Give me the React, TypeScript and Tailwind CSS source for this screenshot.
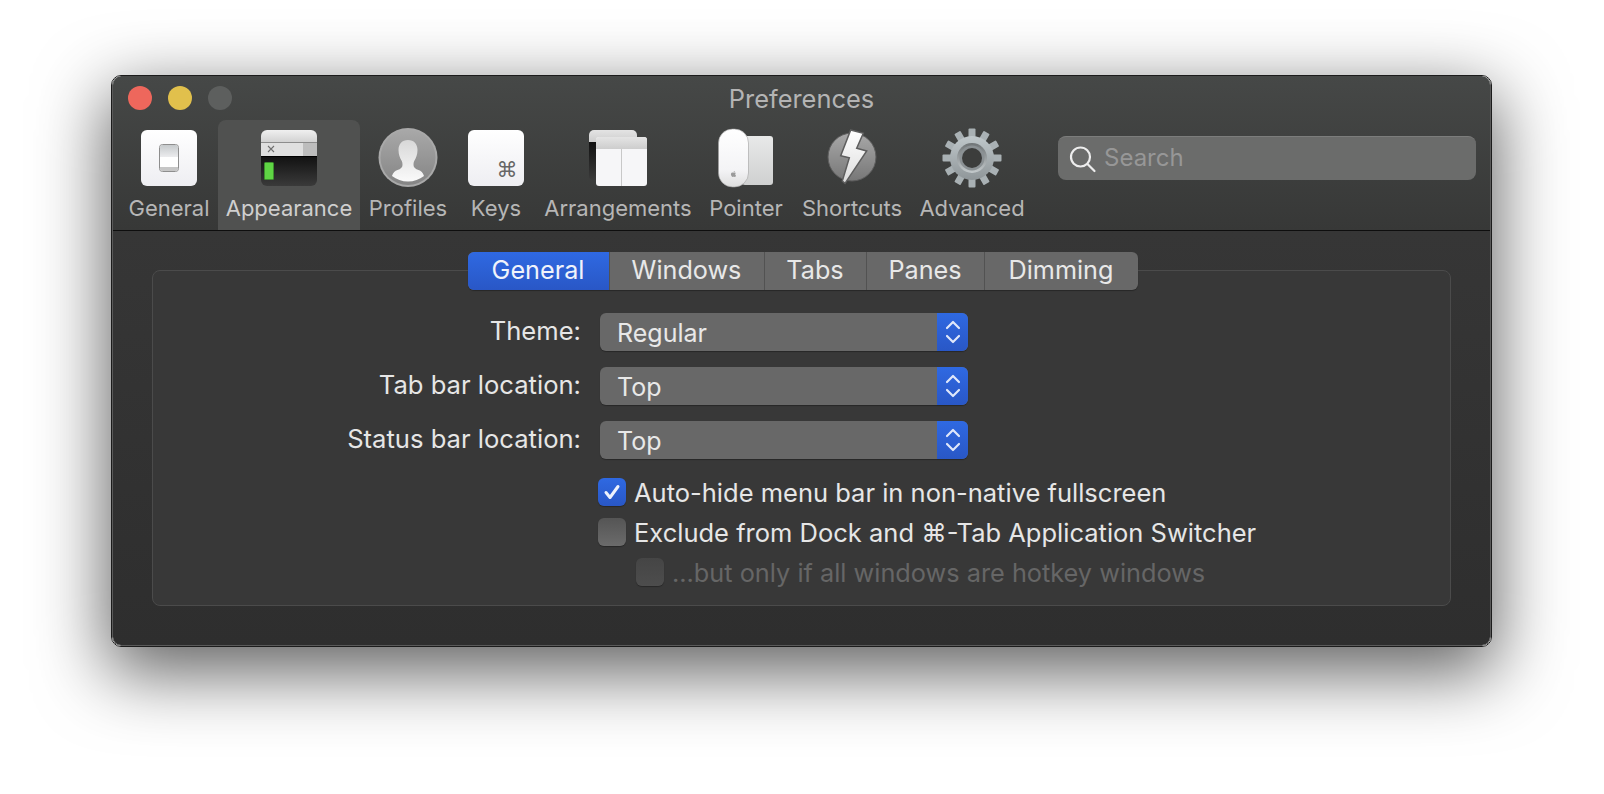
import { FaApple } from "react-icons/fa";

const font = { fontFamily: "Inter, 'DejaVu Sans', sans-serif" };

function GeneralIcon() {
   return (
      <svg width="60" height="60" viewBox="0 0 60 60">
         <defs>
            <linearGradient id="keyBg" x1="0" y1="0" x2="0" y2="1">
               <stop offset="0" stopColor="#ffffff" />
               <stop offset="1" stopColor="#eeeef2" />
            </linearGradient>
            <linearGradient id="swTop" x1="0" y1="0" x2="0" y2="1">
               <stop offset="0" stopColor="#c6cacc" />
               <stop offset="1" stopColor="#ececee" />
            </linearGradient>
         </defs>
         <rect x="2" y="2" width="56" height="56" rx="6" fill="url(#keyBg)" />
         <rect x="20.500" y="16.500" width="19" height="27" rx="3" fill="#fff" stroke="#8e8e8e" />
         <path d="M21 19.500a2.500 2.500 0 0 1 2.500-2.500h13a2.500 2.500 0 0 1 2.500 2.500V29H21z" fill="url(#swTop)" />
         <path d="M21 39h18v1.500a2.500 2.500 0 0 1-2.500 2.500h-13a2.500 2.500 0 0 1-2.500-2.500z" fill="#c6c6c6" />
      </svg>
   );
}

function AppearanceIcon() {
   return (
      <svg width="60" height="60" viewBox="0 0 60 60">
         <defs>
            <linearGradient id="termTop" x1="0" y1="0" x2="0" y2="1">
               <stop offset="0" stopColor="#f0f0f0" />
               <stop offset="1" stopColor="#d2d2d2" />
            </linearGradient>
            <linearGradient id="termBody" x1="0" y1="0" x2="0" y2="1">
               <stop offset="0" stopColor="#111111" />
               <stop offset="1" stopColor="#3a3a3a" />
            </linearGradient>
         </defs>
         <path d="M2 8a6 6 0 0 1 6-6h44a6 6 0 0 1 6 6v6H2z" fill="url(#termTop)" />
         <rect x="2" y="14" width="56" height="1" fill="#8c8c8c" />
         <rect x="2" y="15" width="42" height="13" fill="#dfdfdf" />
         <rect x="44" y="15" width="14" height="13" fill="#bdbdbd" />
         <path d="M9 18l6 6M15 18l-6 6" stroke="#6f6f6f" strokeWidth="1.100" />
         <path d="M2 28h56v24a6 6 0 0 1-6 6H8a6 6 0 0 1-6-6z" fill="url(#termBody)" />
         <rect x="2" y="28" width="56" height="1" fill="#000" />
         <rect x="5" y="34" width="10" height="18" rx="1.500" fill="#3e8f2e" />
         <rect x="6" y="35" width="8" height="16" fill="#5fd544" />
      </svg>
   );
}

function ProfilesIcon() {
   return (
      <svg width="60" height="60" viewBox="0 0 60 60">
         <defs>
            <linearGradient id="profBg" x1="0" y1="0" x2="0" y2="1">
               <stop offset="0" stopColor="#a8a8a8" />
               <stop offset="1" stopColor="#858585" />
            </linearGradient>
            <linearGradient id="profFg" x1="0" y1="0" x2="0" y2="1">
               <stop offset="0" stopColor="#d8d8d8" />
               <stop offset="1" stopColor="#fafafa" />
            </linearGradient>
         </defs>
         <circle cx="30" cy="29.500" r="29.500" fill="#a9a9a9" />
         <circle cx="30" cy="29.500" r="27.500" fill="url(#profBg)" />
         <path
            d="M30 12c-6 0-9.500 4-9.500 10 0 4.500 1.500 8 3 10.500 .8 1.300 1 2.500 1 4.500 0 2.500-2 4-5 5-2.500 .9-4.500 2.500-5.500 6 4.500 3.500 10 5.500 16 5.500s11.500-2 16-5.500c-1-3.500-3-5.100-5.500-6-3-1-5-2.500-5-5 0-2 .2-3.200 1-4.500 1.500-2.500 3-6 3-10.500 0-6-3.500-10-9.500-10z"
            fill="url(#profFg)"
         />
      </svg>
   );
}

function KeysIcon() {
   return (
      <svg width="60" height="60" viewBox="0 0 60 60">
         <defs>
            <linearGradient id="keyBg2" x1="0" y1="0" x2="0" y2="1">
               <stop offset="0" stopColor="#ffffff" />
               <stop offset="1" stopColor="#eeeef2" />
            </linearGradient>
         </defs>
         <rect x="2" y="2" width="56" height="56" rx="6" fill="url(#keyBg2)" />
         <text x="41" y="49" textAnchor="middle" fontSize="21" fill="#666666" fontFamily="'DejaVu Sans', sans-serif">⌘</text>
      </svg>
   );
}

function ArrangementsIcon() {
   return (
      <svg width="60" height="60" viewBox="0 0 60 60">
         <defs>
            <linearGradient id="arrHead" x1="0" y1="0" x2="0" y2="1">
               <stop offset="0" stopColor="#e4e4e4" />
               <stop offset="1" stopColor="#cdcdcd" />
            </linearGradient>
            <linearGradient id="arrDark" x1="0" y1="0" x2="0" y2="1">
               <stop offset="0" stopColor="#111111" />
               <stop offset="1" stopColor="#3a3a3a" />
            </linearGradient>
         </defs>
         <path d="M1 7a5 5 0 0 1 5-5h38a5 5 0 0 1 5 5v7H1z" fill="url(#arrHead)" />
         <path d="M1 14h12v38H5a4 4 0 0 1-4-4z" fill="url(#arrDark)" />
         <rect x="8" y="9" width="51" height="49" rx="3" fill="#f6f6f8" />
         <path d="M8 12a3 3 0 0 1 3-3h45a3 3 0 0 1 3 3v9H8z" fill="url(#arrHead)" />
         <rect x="33" y="21" width="1" height="37" fill="#c8c8c8" />
      </svg>
   );
}

function PointerIcon() {
   return (
      <svg width="60" height="60" viewBox="0 0 60 60">
         <defs>
            <linearGradient id="padBg" x1="0" y1="0" x2="0" y2="1">
               <stop offset="0" stopColor="#e8e9e9" />
               <stop offset="1" stopColor="#cfd0d0" />
            </linearGradient>
            <linearGradient id="mouseBg" x1="0" y1="0" x2="0" y2="1">
               <stop offset="0" stopColor="#ffffff" />
               <stop offset="0.7" stopColor="#f4f4f6" />
               <stop offset="1" stopColor="#dedede" />
            </linearGradient>
         </defs>
         <rect x="26" y="8" width="31" height="49" rx="3" fill="url(#padBg)" />
         <rect x="2.500" y="1" width="30" height="58" rx="14" fill="url(#mouseBg)" stroke="#a0a0a0" strokeWidth="0.600" />
         <FaApple x="14" y="42.500" size={7} color="#9a9a9a" />
      </svg>
   );
}

function ShortcutsIcon() {
   return (
      <svg width="60" height="60" viewBox="0 0 60 60">
         <defs>
            <linearGradient id="boltBg" x1="0" y1="0" x2="0" y2="1">
               <stop offset="0" stopColor="#a8a8a8" />
               <stop offset="1" stopColor="#777777" />
            </linearGradient>
            <linearGradient id="boltFg" x1="0" y1="0" x2="0" y2="1">
               <stop offset="0" stopColor="#ffffff" />
               <stop offset="1" stopColor="#dcdcdc" />
            </linearGradient>
         </defs>
         <circle cx="30" cy="29" r="24" fill="url(#boltBg)" stroke="#5c5c5c" />
         <polygon
            points="28.700,2 41.300,5.300 34.700,20.300 44.700,23 23,55.300 20.300,53 27.300,29.700 18.700,27.700"
            fill="url(#boltFg)"
            stroke="#5e5e5e"
            strokeWidth="1.500"
         />
      </svg>
   );
}

function AdvancedIcon() {
   const teeth = [0, 30, 60, 90, 120, 150, 180, 210, 240, 270, 300, 330];
   return (
      <svg width="60" height="60" viewBox="0 0 60 60">
         <defs>
            <linearGradient id="gearBg" x1="0" y1="0" x2="0" y2="1">
               <stop offset="0" stopColor="#c0c8cb" />
               <stop offset="1" stopColor="#8f9699" />
            </linearGradient>
            <linearGradient id="gearRing" x1="0" y1="0" x2="0" y2="1">
               <stop offset="0" stopColor="#6f7476" />
               <stop offset="1" stopColor="#c4cacc" />
            </linearGradient>
         </defs>
         <g fill="#a9b1b4">
            {teeth.map((a) => (
               <rect key={a} x="26.500" y="0.500" width="7" height="12" rx="1" transform={`rotate(${a} 30 30)`} />
            ))}
         </g>
         <circle cx="30" cy="30" r="22" fill="url(#gearBg)" />
         <circle cx="30" cy="30" r="15" fill="url(#gearRing)" />
         <circle cx="30" cy="30" r="12.500" fill="#8b9194" />
         <circle cx="30" cy="30" r="10" fill="#3c3d3c" />
      </svg>
   );
}

const tools = [
   { label: "General", width: "w-[98px]", icon: <GeneralIcon /> },
   { label: "Appearance", width: "w-[142px]", icon: <AppearanceIcon />, active: true },
   { label: "Profiles", width: "w-[96px]", icon: <ProfilesIcon /> },
   { label: "Keys", width: "w-[80px]", icon: <KeysIcon /> },
   { label: "Arrangements", width: "w-[164px]", icon: <ArrangementsIcon /> },
   { label: "Pointer", width: "w-[92px]", icon: <PointerIcon /> },
   { label: "Shortcuts", width: "w-[120px]", icon: <ShortcutsIcon /> },
   { label: "Advanced", width: "w-[120px]", icon: <AdvancedIcon /> },
];

const tabs = [
   { label: "General", width: "w-[142px]", active: true },
   { label: "Windows", width: "w-[155px]" },
   { label: "Tabs", width: "w-[102px]" },
   { label: "Panes", width: "w-[118px]" },
   { label: "Dimming", width: "w-[153px]" },
];

function Select({ label, value }: { label: string; value: string }) {
   return (
      <div className="flex items-center h-[38px]">
         <div className="w-[428px] pb-[2px] text-right text-[25.6px] text-[#e6e6e6]">{label}</div>
         <div className="ml-[19px] w-[368px] h-[38px] flex rounded-[6px] overflow-hidden bg-[#686868] shadow-[0_1px_1px_rgba(0,0,0,0.3)]">
            <div className="flex-1 pl-[17px] pt-[4px] flex items-center text-[25px] text-[#e8e8e8]">{value}</div>
            <div className="w-[31px] flex items-center justify-center bg-gradient-to-b from-[#2f69e2] to-[#2957c6]">
               <svg width="18" height="30" viewBox="0 0 18 30" fill="none" stroke="#dfe7fa" strokeWidth="2.200" strokeLinecap="round" strokeLinejoin="round">
                  <path d="M3 11l6-6 6 6" />
                  <path d="M3 19l6 6 6-6" />
               </svg>
            </div>
         </div>
      </div>
   );
}

function Check({ label, checked, disabled, className }: { label: string; checked?: boolean; disabled?: boolean; className: string }) {
   const box = checked
      ? "bg-gradient-to-b from-[#2f69e2] to-[#2957c6]"
      : disabled
      ? "bg-gradient-to-b from-[#454545] to-[#4d4d4d]"
      : "bg-gradient-to-b from-[#555555] to-[#6b6b6b]";
   return (
      <div className={`flex items-center h-[28px] ${className}`}>
         <div className={`w-[28px] h-[28px] rounded-[6px] flex items-center justify-center shadow-[0_1px_1px_rgba(0,0,0,0.3)] ${box}`}>
            {checked && (
               <svg width="20" height="20" viewBox="0 0 20 20" fill="none" stroke="#eef2fc" strokeWidth="3" strokeLinecap="round" strokeLinejoin="round">
                  <path d="M4 10.500l4 5 8-11" />
               </svg>
            )}
         </div>
         <div className={`ml-[8px] pt-[2px] whitespace-nowrap ${disabled ? "text-[25.3px] text-[#666666]" : "text-[25.5px] text-[#e6e6e6]"}`}>{label}</div>
      </div>
   );
}

export default function App() {
   return (
      <div className="w-full h-[794px] bg-white overflow-hidden pl-[111px] pt-[75px]" style={font}>
         <div className="w-[1381px] h-[572px] rounded-[10px] overflow-hidden border border-[#1c1c1c] shadow-[0_22px_70px_4px_rgba(0,0,0,0.62)]">
            <div className="h-full rounded-[9px] overflow-hidden border-x border-b border-[#5a5a5a] flex flex-col">
               {/* titlebar + toolbar */}
               <div className="h-[155px] shrink-0 bg-gradient-to-b from-[#464847] to-[#373837] border-b border-[#0e0e0e]">
                  <div className="h-[44px] grid grid-cols-[1fr_auto_1fr] items-center px-[15px]">
                     <div className="flex gap-[16px]">
                        <div className="w-[24px] h-[24px] rounded-full bg-[#ee675c]" />
                        <div className="w-[24px] h-[24px] rounded-full bg-[#e1c04c]" />
                        <div className="w-[24px] h-[24px] rounded-full bg-[#5d5f5e]" />
                     </div>
                     <div className="pt-[3px] text-[25.4px] text-[#b4b4b4]">Preferences</div>
                     <div />
                  </div>
                  <div className="flex pl-[7px]">
                     {tools.map((t) => (
                        <div
                           key={t.label}
                           className={`${t.width} h-[110px] pt-[8px] flex flex-col items-center rounded-t-[8px] ${t.active ? "bg-[#505150] text-[#cfcfcf]" : "text-[#b6b6b6]"}`}
                        >
                           {t.icon}
                           <div className="mt-[5px] text-[22px] leading-[30px] whitespace-nowrap">{t.label}</div>
                        </div>
                     ))}
                     <div className="ml-[26px] mt-[16px] w-[418px] h-[44px] rounded-[8px] bg-[#6b6c6b] border-t border-[#7c7d7c] flex items-center pl-[11px]">
                        <svg width="30" height="30" viewBox="0 0 30 30" fill="none" stroke="#ededed" strokeWidth="2.200" strokeLinecap="round">
                           <circle cx="11.500" cy="13" r="9.500" />
                           <path d="M18.500 20l7 7" />
                        </svg>
                        <div className="ml-[5px] pb-[2px] text-[24px] text-[#979797]">Search</div>
                     </div>
                  </div>
               </div>
               {/* content */}
               <div className="flex-1 bg-gradient-to-b from-[#363636] to-[#2e2e2e] px-[39px] pt-[39px]">
                  <div className="h-[336px] rounded-[8px] bg-[#383838] border border-[#4b4b4b] flex flex-col">
                     <div className="flex justify-center -mt-[19px]">
                        <div className="ml-[2px] flex h-[38px] rounded-[6px] overflow-hidden bg-[#686868] shadow-[0_1px_1px_rgba(0,0,0,0.3)] divide-x divide-[#525252]">
                           {tabs.map((t) => (
                              <div
                                 key={t.label}
                                 className={`${t.width} flex items-center justify-center text-[25.2px] ${t.active ? "bg-gradient-to-b from-[#2f69e2] to-[#2957c6] text-[#f0f3fb]" : "text-[#e8e8e8]"}`}
                              >
                                 {t.label}
                              </div>
                           ))}
                        </div>
                     </div>
                     <div className="mt-[23px] flex flex-col gap-[16px]">
                        <Select label="Theme:" value="Regular" />
                        <Select label="Tab bar location:" value="Top" />
                        <Select label="Status bar location:" value="Top" />
                     </div>
                     <div className="mt-[19px] flex flex-col gap-[12px]">
                        <Check className="ml-[445px]" checked label="Auto-hide menu bar in non-native fullscreen" />
                        <Check className="ml-[445px]" label="Exclude from Dock and ⌘-Tab Application Switcher" />
                        <Check className="ml-[483px]" disabled label="...but only if all windows are hotkey windows" />
                     </div>
                  </div>
               </div>
            </div>
         </div>
      </div>
   );
}
